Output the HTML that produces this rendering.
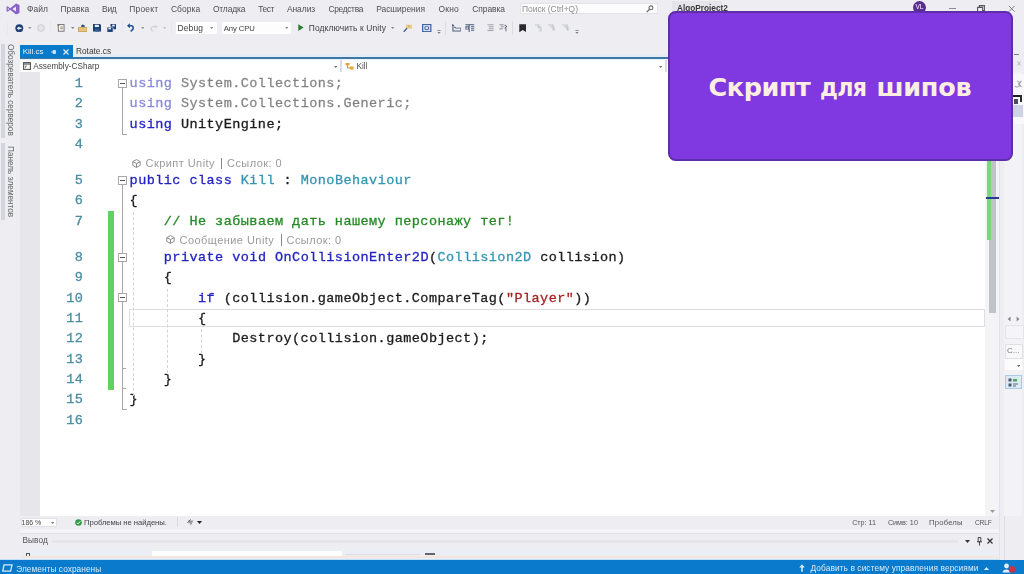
<!DOCTYPE html>
<html lang="ru">
<head>
<meta charset="utf-8">
<title>Скрипт для шипов</title>
<style>
html,body{margin:0;padding:0;}
body{width:1024px;height:574px;overflow:hidden;position:relative;background:#eeeef2;font-family:"Liberation Sans",sans-serif;}
.abs{position:absolute;}
#vs{position:absolute;left:0;top:0;width:1024px;height:574px;filter:blur(0.55px);will-change:transform;}
.t{position:absolute;white-space:pre;line-height:1;}
/* menu */
.menu{font-size:8.45px;color:#505054;top:5.1px;}
.tb{font-size:8.45px;color:#404044;top:23.9px;}
.sm{font-size:8.3px;letter-spacing:0.1px;}
/* code */
.ln{position:absolute;left:40px;width:43.3px;text-align:right;font-family:"Liberation Mono",monospace;font-size:13.5px;letter-spacing:0.45px;line-height:20px;color:#4d8da3;height:20px;-webkit-text-stroke:0.3px currentColor;}
.cl{position:absolute;left:129.6px;font-family:"Liberation Mono",monospace;font-size:13.5px;letter-spacing:0.45px;line-height:20px;height:20px;white-space:pre;color:#1c1c1c;-webkit-text-stroke:0.3px currentColor;}
.kw{color:#2424c4;}
.ty{color:#3595b3;}
.cm{color:#258a25;}
.st{color:#a82222;}
.dim{opacity:.55;}
.lens{position:absolute;font-size:11px;letter-spacing:0.45px;color:#9a9a9a;white-space:pre;line-height:12px;}
.ob{position:absolute;width:7px;height:7px;border:1px solid #a8a8a8;background:#fff;}
.ob:after{content:"";position:absolute;left:1px;right:1px;top:3px;height:1px;background:#555;}
</style>
</head>
<body>
<div class="abs" style="left:0;top:560px;width:1024px;height:14px;background:#0a7acc;"></div>
<div id="vs">
<!-- ===== title / menu bar ===== -->
<div class="abs" id="menubar" style="left:0;top:0;width:1024px;height:18px;background:#eeeef2;"></div>
<svg class="abs" style="left:6px;top:3px" width="14" height="12" viewBox="0 0 14 12"><path d="M10 0.5 L13.5 2 V10 L10 11.5 L4.2 6.8 L1.6 8.8 L0.5 8.2 V3.8 L1.6 3.2 L4.2 5.2 Z M10 3.6 L6.4 6 L10 8.4 Z M1.8 4.8 V7.2 L3.2 6 Z" fill="#8862c6"/></svg>
<span class="t menu" style="left:26.9px;letter-spacing:0.083px;">Файл</span>
<span class="t menu" style="left:60.4px;letter-spacing:0.037px;">Правка</span>
<span class="t menu" style="left:102.1px;letter-spacing:-0.333px;">Вид</span>
<span class="t menu" style="left:129.2px;letter-spacing:0.241px;">Проект</span>
<span class="t menu" style="left:170.9px;letter-spacing:0.082px;">Сборка</span>
<span class="t menu" style="left:212.9px;letter-spacing:-0.143px;">Отладка</span>
<span class="t menu" style="left:258.2px;letter-spacing:-0.390px;">Тест</span>
<span class="t menu" style="left:286.9px;letter-spacing:-0.040px;">Анализ</span>
<span class="t menu" style="left:328.4px;letter-spacing:-0.342px;">Средства</span>
<span class="t menu" style="left:376.2px;letter-spacing:-0.031px;">Расширения</span>
<span class="t menu" style="left:438.4px;letter-spacing:0.264px;">Окно</span>
<span class="t menu" style="left:472.2px;letter-spacing:-0.052px;">Справка</span>

<!-- search box -->
<div class="abs" style="left:519.5px;top:2.8px;width:138.5px;height:11.5px;background:#fcfcfd;border:1px solid #e2e2e8;box-sizing:border-box;"></div>
<span class="t" style="left:522px;top:4.8px;font-size:8.45px;color:#8e8e8e;">Поиск (Ctrl+Q)</span>
<svg class="abs" style="left:645.5px;top:4.6px" width="8" height="8" viewBox="0 0 9 9"><circle cx="5.6" cy="3.2" r="2.2" fill="none" stroke="#666" stroke-width="1.2"/><path d="M4 4.8 L0.8 8" stroke="#666" stroke-width="1.4"/></svg>
<div class="abs" style="left:672px;top:1px;width:50px;height:13px;background:#e4e4ea;"></div>
<span class="t" style="left:677px;top:4.6px;font-size:8.25px;color:#3a3a3a;font-weight:bold;">AlgoProject2</span>
<div class="abs" style="left:913px;top:1px;width:13px;height:13px;border-radius:7px;background:#5c2d91;"></div>
<span class="t" style="left:915.5px;top:4px;font-size:6.5px;color:#fff;">VL</span>
<div class="abs" style="left:948.5px;top:8px;width:7px;height:1px;background:#8c8c8c;"></div>
<svg class="abs" style="left:977px;top:4.5px" width="8" height="8" viewBox="0 0 8 8"><path d="M0.6 2.4 H5.6 V7.4 H0.6 Z M2.4 2.4 V0.6 H7.4 V5.6 H5.6" fill="none" stroke="#555" stroke-width="1.1"/></svg>
<svg class="abs" style="left:1007.5px;top:5px" width="7.5" height="7.5" viewBox="0 0 9 9"><path d="M1 1 L8 8 M8 1 L1 8" stroke="#777" stroke-width="1.1"/></svg>

<!-- ===== toolbar ===== -->
<div class="abs" id="toolbar" style="left:0;top:18px;width:1024px;height:26px;background:#eeeef2;"></div>
<div class="abs" style="left:6.5px;top:22px;width:1.5px;height:13px;background:#e8e8ee;"></div>
<!-- back -->
<svg class="abs" style="left:15px;top:23.7px" width="8.6" height="8.6" viewBox="0 0 10 10"><circle cx="5" cy="5" r="4.6" fill="#1d3f74"/><path d="M2 5 L5 2.6 V4.2 H7.6 V5.8 H5 V7.4 Z" fill="#eef"/></svg>
<svg class="abs" style="left:28.3px;top:27px" width="3.6" height="2.2" viewBox="0 0 5 3"><path d="M0 0 H5 L2.5 3 Z" fill="#9a9aa4"/></svg>
<svg class="abs" style="left:36.5px;top:24px" width="8" height="8" viewBox="0 0 9 9"><circle cx="4.5" cy="4.5" r="3.6" fill="#e6e6ea" stroke="#cfcfd6" stroke-width="1.2"/></svg>
<div class="abs" style="left:50px;top:21px;width:1px;height:13px;background:#e7e7ed;"></div>
<!-- new item -->
<svg class="abs" style="left:56.5px;top:23.3px" width="8.4" height="9" viewBox="0 0 10 11"><rect x="1.5" y="2" width="7" height="8" fill="#fafafa" stroke="#666" stroke-width="1.1"/><path d="M0.5 1.5 l2 2 M2.5 1.5 l-2 2 M4 5 h3 M4 7 h3" stroke="#7a6a3a" stroke-width="1"/></svg>
<svg class="abs" style="left:70.5px;top:27px" width="3.6" height="2.2" viewBox="0 0 5 3"><path d="M0 0 H5 L2.5 3 Z" fill="#8a8a94"/></svg>
<!-- open -->
<svg class="abs" style="left:78px;top:23.6px" width="9.4" height="8.4" viewBox="0 0 10 11" preserveAspectRatio="none"><path d="M0.5 10 V4.5 H9.5 V10 Z" fill="#e8c37a" stroke="#b98f3c" stroke-width=".8"/><path d="M3.5 4 V1.5 L5.2 0.5 L7 1.5 V4" fill="#2a4f86"/></svg>
<!-- save -->
<svg class="abs" style="left:92.8px;top:24.2px" width="8.2" height="7.6" viewBox="0 0 9 10" preserveAspectRatio="none"><path d="M0 0 H7.5 L9 1.5 V10 H0 Z" fill="#1d3f74"/><rect x="2" y="1" width="4.5" height="3" fill="#e8eefa"/><rect x="2" y="6.5" width="5" height="3.5" fill="#3b5c92"/></svg>
<!-- save all -->
<svg class="abs" style="left:106.6px;top:23.5px" width="9.6" height="8.4" viewBox="0 0 11 11" preserveAspectRatio="none"><path d="M4 0 H10 L11 1 V7 H4 Z" fill="#1d3f74"/><rect x="6" y="0.8" width="3" height="2.4" fill="#e8eefa"/><path d="M0 4 H6 L7 5 V11 H0 Z" fill="#1d3f74" stroke="#eeeef2" stroke-width=".8"/><rect x="1.6" y="4.8" width="3" height="2.2" fill="#e8eefa"/></svg>
<div class="abs" style="left:121.5px;top:21px;width:1px;height:13px;background:#e7e7ed;"></div>
<!-- undo -->
<svg class="abs" style="left:126.5px;top:23.4px" width="8" height="8.8" viewBox="0 0 10 11"><path d="M1.2 3.5 H5.8 A3 3 0 0 1 5.8 9.2 L4.6 10.4" fill="none" stroke="#1f4f94" stroke-width="2"/><path d="M0 3.5 L3.6 0.4 V6.6 Z" fill="#1f4f94"/></svg>
<svg class="abs" style="left:140.5px;top:27px" width="3.6" height="2.2" viewBox="0 0 5 3"><path d="M0 0 H5 L2.5 3 Z" fill="#9a9aa4"/></svg>
<!-- redo (disabled) -->
<svg class="abs" style="left:150px;top:23.6px" width="7.6" height="8.4" viewBox="0 0 9 10"><path d="M8 3.2 H4 A2.6 2.6 0 0 0 4 8.4" fill="none" stroke="#d2d2da" stroke-width="1.6"/><path d="M9 3.2 L6 0.6 V5.8 Z" fill="#d2d2da"/></svg>
<svg class="abs" style="left:162.5px;top:27px" width="3.6" height="2.2" viewBox="0 0 5 3"><path d="M0 0 H5 L2.5 3 Z" fill="#c4c4cc"/></svg>
<div class="abs" style="left:170.5px;top:21px;width:1px;height:13px;background:#e7e7ed;"></div>
<!-- combos -->
<div class="abs" style="left:176px;top:22px;width:41px;height:12px;background:#fdfdfe;"></div>
<span class="t tb" style="left:177.5px;letter-spacing:0.156px;">Debug</span>
<svg class="abs" style="left:210px;top:27px" width="3.4" height="2.1" viewBox="0 0 4 2.5"><path d="M0 0 H4 L2 2.5 Z" fill="#8a8a94"/></svg>
<div class="abs" style="left:221.5px;top:22px;width:69.5px;height:12px;background:#fdfdfe;"></div>
<span class="t tb" style="left:223.7px;top:24.53px;font-size:7.7px;letter-spacing:-0.071px;">Any CPU</span>
<svg class="abs" style="left:284.5px;top:27px" width="3.4" height="2.1" viewBox="0 0 4 2.5"><path d="M0 0 H4 L2 2.5 Z" fill="#8a8a94"/></svg>
<svg class="abs" style="left:298px;top:24px" width="6" height="7.2" viewBox="0 0 7 8"><path d="M0.3 0 L6.6 4 L0.3 8 Z" fill="#2f7d32"/></svg>
<span class="t tb" style="left:308.8px;letter-spacing:0.104px;">Подключить к Unity</span>
<svg class="abs" style="left:390.5px;top:27px" width="3.4" height="2.1" viewBox="0 0 4 2.5"><path d="M0 0 H4 L2 2.5 Z" fill="#8a8a94"/></svg>
<!-- yellow icon -->
<svg class="abs" style="left:403px;top:23.8px" width="9.5" height="8.4" viewBox="0 0 10 10" preserveAspectRatio="none"><path d="M3 0.8 H9.6 V5.6 H3 Z" fill="#e9cf86"/><path d="M0.8 9.4 L4.2 4.8" stroke="#44639a" stroke-width="1.6"/><path d="M5 1.6 l2 2" stroke="#b59a4a" stroke-width="1"/></svg>
<!-- blue square icon -->
<svg class="abs" style="left:422.3px;top:23.8px" width="9.5" height="8.2" viewBox="0 0 10 10" preserveAspectRatio="none"><rect x=".7" y=".7" width="8.6" height="8.6" fill="#dfe7f4" stroke="#3e5f9a" stroke-width="1.3"/><circle cx="5" cy="5" r="2.1" fill="none" stroke="#3e5f9a" stroke-width="1.1"/></svg>
<svg class="abs" style="left:437px;top:29.5px" width="4" height="4" viewBox="0 0 5 5"><path d="M0.5 0.6 H4.5" stroke="#777" stroke-width="1"/><path d="M0.5 2.4 H4.5 L2.5 4.8 Z" fill="#777"/></svg>
<div class="abs" style="left:445px;top:21px;width:1px;height:14px;background:#dcdce3;"></div>
<svg class="abs" style="left:451.5px;top:23.8px" width="9.5" height="8.2" viewBox="0 0 10 10" preserveAspectRatio="none"><path d="M1 0.5 V8.5 H9.5 V5 H4 L2.5 3.5" fill="none" stroke="#4a5a78" stroke-width="1.1"/><path d="M0 0 l2.6 2.4 h-2.6z" fill="#4a5a78"/></svg>
<svg class="abs" style="left:465px;top:23.6px" width="10.2" height="8.6" viewBox="0 0 11 11" preserveAspectRatio="none"><path d="M0.5 1 H10 M4.5 1 V10.5 M1 3.5 H4 V6.5 H1 Z M6.5 3 H10 M6.5 5.5 H10 M6.5 8 H10" fill="none" stroke="#4a5a78" stroke-width="1.1"/></svg>
<svg class="abs" style="left:486.5px;top:24.2px" width="7" height="7.4" viewBox="0 0 8 9" preserveAspectRatio="none"><path d="M0.5 1 H7.5 M2 3.4 H7.5 M2 5.8 H7.5 M0.5 8 H7.5" stroke="#9a9aa6" stroke-width="1.1"/></svg>
<svg class="abs" style="left:498.5px;top:24.2px" width="8.4" height="7.6" viewBox="0 0 9 9" preserveAspectRatio="none"><path d="M0.5 1 H5 M2 3.4 H5 M0.5 5.8 H4 M6 1 L8.3 3 L6 5.2 M7.5 5 V8.5" fill="none" stroke="#6a6a78" stroke-width="1.1"/></svg>
<div class="abs" style="left:511.5px;top:21px;width:1px;height:14px;background:#dcdce3;"></div>
<!-- bookmark -->
<svg class="abs" style="left:518.5px;top:23.6px" width="7.6" height="8.4" viewBox="0 0 8 9" preserveAspectRatio="none"><path d="M0.3 0.3 H7.7 V8.8 L4 6.4 L0.3 8.8 Z" fill="#2a2a2e"/></svg>
<svg class="abs" style="left:533.5px;top:23.5px" width="8" height="8" viewBox="0 0 8 8"><path d="M1 1 H5 V5 M3 3 H7 V7 H5" fill="none" stroke="#c6c6cf" stroke-width="1.1"/></svg>
<svg class="abs" style="left:547px;top:23.5px" width="8" height="8" viewBox="0 0 8 8"><path d="M1 1 H6 V6 M3 3 H7 V7" fill="none" stroke="#c6c6cf" stroke-width="1.1"/></svg>
<svg class="abs" style="left:561px;top:23.5px" width="8" height="8" viewBox="0 0 8 8"><path d="M1 1 H6 V6 M3 3 H7 V7" fill="none" stroke="#c6c6cf" stroke-width="1.1"/></svg>
<svg class="abs" style="left:575px;top:29.5px" width="4" height="4" viewBox="0 0 5 5"><path d="M0.5 0.6 H4.5" stroke="#777" stroke-width="1"/><path d="M0.5 2.4 H4.5 L2.5 4.8 Z" fill="#777"/></svg>


<!-- ===== left strip ===== -->
<div class="abs" id="leftstrip" style="left:0;top:44px;width:20px;height:516px;background:#eeeef2;"></div>
<div class="abs" style="left:1px;top:44px;width:4px;height:94px;background:#d4d5dd;"></div>
<div class="abs" style="left:1px;top:143px;width:4px;height:77px;background:#d4d5dd;"></div>
<span class="t" style="left:14.4px;top:44px;font-size:8.2px;color:#686868;transform-origin:0 0;transform:rotate(90deg);">Обозреватель серверов</span>
<span class="t" style="left:14.4px;top:146.3px;font-size:8.2px;color:#686868;transform-origin:0 0;transform:rotate(90deg);">Панель элементов</span>


<!-- ===== tabs ===== -->
<div class="abs" style="left:20px;top:53.5px;width:980px;height:4px;background:linear-gradient(to bottom,rgba(222,238,252,0),#d9ebfa);"></div>
<div class="abs" id="tabs" style="left:20px;top:57.4px;width:980px;height:1.6px;background:#3f76a2;"></div>
<div class="abs" style="left:20px;top:44.5px;width:53px;height:13.5px;background:#0a7acb;"></div>
<span class="t" style="left:22.7px;top:47.7px;font-size:8px;color:#e8f2fb;">Kill.cs</span>
<svg class="abs" style="left:51px;top:50px" width="6" height="4" viewBox="0 0 6 4"><path d="M0 2 H2 M2 0.5 V3.5 H4.5 V0.5 Z" fill="#cfe4f6" stroke="#cfe4f6" stroke-width=".8"/></svg>
<svg class="abs" style="left:62.5px;top:49px" width="6" height="6" viewBox="0 0 6 6"><path d="M0.5 0.5 L5.5 5.5 M5.5 0.5 L0.5 5.5" stroke="#e6f1fb" stroke-width="1.1"/></svg>
<span class="t" style="left:76px;top:47.1px;font-size:8.3px;color:#3a3a3a;">Rotate.cs</span>
<!-- nav bar -->
<div class="abs" style="left:20px;top:59px;width:980px;height:13.5px;background:#fff;border-bottom:1px solid #dcdce0;box-sizing:border-box;"></div>
<div class="abs" style="left:20px;top:59px;width:980px;height:2px;background:linear-gradient(to bottom,#e4f1fb,#fff);"></div>
<svg class="abs" style="left:22.5px;top:61.5px" width="8" height="8" viewBox="0 0 8 8"><rect x=".6" y=".6" width="6.8" height="6.8" fill="#fff" stroke="#555" stroke-width="1.1"/><path d="M0.6 2 H7.4" stroke="#555" stroke-width="1.2"/><path d="M2.4 4 V6.2 M2.4 4 H4" stroke="#777" stroke-width=".9"/></svg>
<span class="t" style="left:33.3px;top:63px;font-size:8.2px;color:#444;">Assembly-CSharp</span>
<svg class="abs" style="left:334px;top:65.5px" width="3.4" height="2.1" viewBox="0 0 4 2.5"><path d="M0 0 H4 L2 2.5 Z" fill="#777"/></svg>
<div class="abs" style="left:339.5px;top:59.5px;width:2px;height:12px;background:#d9dbe6;"></div>
<svg class="abs" style="left:345px;top:61.5px" width="9" height="8" viewBox="0 0 9 8"><path d="M0.5 1 H4.5 V3.5 H0.5 Z" fill="#e2a33a"/><path d="M5 4.5 H8.5 V7.5 H5 Z" fill="#e2a33a"/><path d="M2.5 3.5 V6 H5" fill="none" stroke="#b5823a" stroke-width=".9"/></svg>
<span class="t" style="left:356.5px;top:63px;font-size:8.2px;color:#555;">Kill</span>
<svg class="abs" style="left:658.5px;top:65.5px" width="3.4" height="2.1" viewBox="0 0 4 2.5"><path d="M0 0 H4 L2 2.5 Z" fill="#777"/></svg>
<div class="abs" style="left:664.5px;top:59.5px;width:2px;height:12px;background:#d9dbe6;"></div>


<!-- ===== editor ===== -->
<div class="abs" id="editor" style="left:20px;top:72px;width:965px;height:443.5px;background:#fff;"></div>
<div class="abs" style="left:20px;top:72px;width:19.5px;height:443.5px;background:#e6e6eb;"></div>
<div class="abs" style="left:128.5px;top:308.5px;width:856.5px;height:18.5px;border:1px solid #dedede;box-sizing:border-box;background:#fff;"></div>
<div class="abs" style="left:108px;top:211px;width:6px;height:178.5px;background:#62d162;"></div>
<div class="ln" style="top:73.90px">1</div>
<div class="cl" style="top:73.90px"><span class="dim"><span class="kw">using</span> System.Collections;</span></div>
<div class="ln" style="top:94.20px">2</div>
<div class="cl" style="top:94.20px"><span class="dim"><span class="kw">using</span> System.Collections.Generic;</span></div>
<div class="ln" style="top:114.50px">3</div>
<div class="cl" style="top:114.50px"><span class="kw">using</span> UnityEngine;</div>
<div class="ln" style="top:134.70px">4</div>
<div class="ln" style="top:171.00px">5</div>
<div class="cl" style="top:171.00px"><span class="kw">public</span> <span class="kw">class</span> <span class="ty">Kill</span> : <span class="ty">MonoBehaviour</span></div>
<div class="ln" style="top:191.35px">6</div>
<div class="cl" style="top:191.35px">{</div>
<div class="ln" style="top:211.70px">7</div>
<div class="cl" style="top:211.70px">    <span class="cm">// Не забываем дать нашему персонажу тег!</span></div>
<div class="ln" style="top:247.90px">8</div>
<div class="cl" style="top:247.90px">    <span class="kw">private</span> <span class="kw">void</span> <span class="kw">OnCollisionEnter2D</span>(<span class="ty">Collision2D</span> collision)</div>
<div class="ln" style="top:268.27px">9</div>
<div class="cl" style="top:268.27px">    {</div>
<div class="ln" style="top:288.64px">10</div>
<div class="cl" style="top:288.64px">        <span class="kw">if</span> (collision.gameObject.CompareTag(<span class="st">"Player"</span>))</div>
<div class="ln" style="top:309.01px">11</div>
<div class="cl" style="top:309.01px">        {</div>
<div class="ln" style="top:329.38px">12</div>
<div class="cl" style="top:329.38px">            Destroy(collision.gameObject);</div>
<div class="ln" style="top:349.75px">13</div>
<div class="cl" style="top:349.75px">        }</div>
<div class="ln" style="top:370.12px">14</div>
<div class="cl" style="top:370.12px">    }</div>
<div class="ln" style="top:390.49px">15</div>
<div class="cl" style="top:390.49px">}</div>
<div class="ln" style="top:410.86px">16</div>
<!-- outlining -->
<div class="abs" style="left:122px;top:88px;width:1px;height:46px;background:#a8a8a8;"></div>
<div class="abs" style="left:122px;top:133.5px;width:5px;height:1px;background:#a8a8a8;"></div>
<div class="abs" style="left:122px;top:185px;width:1px;height:224px;background:#a8a8a8;"></div>
<div class="abs" style="left:122px;top:408.5px;width:5px;height:1px;background:#a8a8a8;"></div>
<div class="abs" style="left:122px;top:367.5px;width:4px;height:1px;background:#a8a8a8;"></div>
<div class="abs" style="left:122px;top:387.5px;width:4px;height:1px;background:#a8a8a8;"></div>
<div class="ob" style="left:118px;top:78.5px"></div>
<div class="ob" style="left:118px;top:175.5px"></div>
<div class="ob" style="left:118px;top:252.5px"></div>
<div class="ob" style="left:118px;top:293px"></div>
<!-- indent guides -->
<div class="abs" style="left:132.5px;top:212px;width:0;height:184px;border-left:1px dashed #d4d4d4;"></div>
<div class="abs" style="left:167px;top:289px;width:0;height:84px;border-left:1px dashed #d4d4d4;"></div>
<div class="abs" style="left:201px;top:329px;width:0;height:24px;border-left:1px dashed #d4d4d4;"></div>
<!-- code lens -->
<svg class="abs" style="left:131.5px;top:158.6px" width="9" height="9" viewBox="0 0 9 9"><path d="M4.5 0.6 L8.2 2.6 V6.4 L4.5 8.4 L0.8 6.4 V2.6 Z M0.8 2.6 L4.5 4.6 L8.2 2.6 M4.5 4.6 V8.4" fill="none" stroke="#8c8c8c" stroke-width="1"/></svg>
<span class="lens" style="left:145.5px;top:157.1px">Скрипт Unity</span>
<div class="abs" style="left:221px;top:157.6px;width:1px;height:11.5px;background:#8a8a8a;"></div>
<span class="lens" style="left:227px;top:157.1px">Ссылок: 0</span>
<svg class="abs" style="left:165.5px;top:235.1px" width="9" height="9" viewBox="0 0 9 9"><path d="M4.5 0.6 L8.2 2.6 V6.4 L4.5 8.4 L0.8 6.4 V2.6 Z M0.8 2.6 L4.5 4.6 L8.2 2.6 M4.5 4.6 V8.4" fill="none" stroke="#8c8c8c" stroke-width="1"/></svg>
<span class="lens" style="left:179.5px;top:233.6px">Сообщение Unity</span>
<div class="abs" style="left:281px;top:234.1px;width:1px;height:11.5px;background:#8a8a8a;"></div>
<span class="lens" style="left:286.5px;top:233.6px">Ссылок: 0</span>


<!-- ===== bottom ===== -->
<div class="abs" id="bottom" style="left:20px;top:515.5px;width:980px;height:13px;background:#eeeef2;"></div>
<div class="abs" style="left:20px;top:528.5px;width:980px;height:4px;background:#f4f4f7;"></div>
<div class="abs" style="left:20.5px;top:518px;width:36.5px;height:9px;background:#fdfdfe;border:1px solid #e0e0e6;box-sizing:border-box;"></div>
<span class="t sm" style="left:21.6px;top:519.39px;font-size:7.0px;color:#444;letter-spacing:-0.040px;">186 %</span>
<svg class="abs" style="left:51px;top:521.5px" width="3.4" height="2.1" viewBox="0 0 4 2.5"><path d="M0 0 H4 L2 2.5 Z" fill="#888"/></svg>
<svg class="abs" style="left:74.5px;top:519px" width="7" height="7" viewBox="0 0 7 7"><circle cx="3.5" cy="3.5" r="3.3" fill="#2f9a45"/><path d="M1.8 3.6 L3.1 4.8 L5.3 2.3" fill="none" stroke="#fff" stroke-width="1"/></svg>
<span class="t sm" style="left:84.0px;top:518.80px;font-size:7.7px;color:#444;letter-spacing:-0.057px;">Проблемы не найдены.</span>
<div class="abs" style="left:176.5px;top:517px;width:1px;height:10px;background:#dadae0;"></div>
<svg class="abs" style="left:187px;top:519px" width="7" height="7" viewBox="0 0 7 7"><path d="M1 1.5 H6.5 L3.8 6.5 Z" fill="#9a9aa2"/><path d="M0.5 4 L3.5 0.5" stroke="#555" stroke-width="1"/></svg>
<svg class="abs" style="left:197px;top:521px" width="5" height="3" viewBox="0 0 5 3"><path d="M0 0 H5 L2.5 3 Z" fill="#222"/></svg>
<span class="t sm" style="left:852.2px;top:519.22px;font-size:7.2px;color:#555;letter-spacing:-0.023px;">Стр: 11</span>
<span class="t sm" style="left:887.9px;top:519.22px;font-size:7.2px;color:#555;letter-spacing:0.004px;">Симв: 10</span>
<span class="t sm" style="left:929.1px;top:518.80px;font-size:7.7px;color:#555;letter-spacing:0.160px;">Пробелы</span>
<span class="t sm" style="left:974.9px;top:519.73px;font-size:6.6px;color:#555;letter-spacing:-0.106px;">CRLF</span>
<!-- output panel -->
<div class="abs" style="left:20px;top:532.5px;width:980px;height:27.5px;background:#eeeef2;border-top:1px solid #e0e0e6;box-sizing:border-box;"></div>
<span class="t sm" style="left:22.4px;top:536.30px;color:#555;letter-spacing:0.077px;">Вывод</span>
<div class="abs" style="left:52px;top:540px;width:906px;height:3px;background:#e6e6ea;"></div>
<svg class="abs" style="left:965px;top:540px" width="5" height="3" viewBox="0 0 5 3"><path d="M0 0 H5 L2.5 3 Z" fill="#333"/></svg>
<svg class="abs" style="left:976.5px;top:536.5px" width="5" height="9" viewBox="0 0 5 9"><path d="M1.2 0.5 H3.8 V4.5 H1.2 Z M0 4.8 H5 M2.5 5 V8.5" fill="none" stroke="#444" stroke-width="1"/></svg>
<svg class="abs" style="left:987px;top:538px" width="6" height="6" viewBox="0 0 6 6"><path d="M0.5 0.5 L5.5 5.5 M5.5 0.5 L0.5 5.5" stroke="#333" stroke-width="1.2"/></svg>
<div class="abs" style="left:22px;top:549px;width:976px;height:11px;background:#eceef6;"></div>
<div class="abs" style="left:25.5px;top:552.5px;width:4px;height:3px;border:1px solid #555;border-bottom:none;box-sizing:border-box;"></div>
<div class="abs" style="left:151.5px;top:551px;width:190.5px;height:6px;background:#fff;"></div>
<div class="abs" style="left:22px;top:556px;width:976px;height:1.5px;background:#f3e6dc;"></div>
<div class="abs" style="left:345px;top:553.5px;width:75px;height:1.5px;background:#dcdce2;"></div>
<div class="abs" style="left:425px;top:553px;width:10px;height:2px;background:#666;"></div>
<!-- status bar -->
<div class="abs" style="left:0;top:558.5px;width:1024px;height:1.5px;background:#bfe0f5;"></div>
<div class="abs" style="left:0;top:560px;width:1024px;height:14px;background:#0a7acc;"></div>
<svg class="abs" style="left:1.5px;top:564px" width="11" height="8" viewBox="0 0 11 8"><path d="M2 0.8 H10 L8.6 7.2 H0.8 Z" fill="none" stroke="#d6ebfa" stroke-width="1.3"/></svg>
<span class="t sm" style="left:16.2px;top:564.50px;color:#d8ebf9;letter-spacing:0.059px;">Элементы сохранены</span>
<svg class="abs" style="left:798.5px;top:564px" width="6" height="8" viewBox="0 0 6 8"><path d="M3 0.3 L5.8 3.6 H3.8 V7.8 H2.2 V3.6 H0.2 Z" fill="#d8ebf9"/></svg>
<span class="t sm" style="left:810.5px;top:564.2px;color:#d8ebf9;letter-spacing:0.108px;">Добавить в систему управления версиями</span>
<svg class="abs" style="left:984px;top:566.5px" width="5" height="3" viewBox="0 0 5 3"><path d="M0 3 H5 L2.5 0 Z" fill="#d8ebf9"/></svg>
<svg class="abs" style="left:1001.5px;top:562.5px" width="14" height="10" viewBox="0 0 14 10"><circle cx="4.5" cy="3" r="2.4" fill="#e4eef8"/><path d="M0.5 9.5 C0.5 5.5 8.5 5.5 8.5 9.5 Z" fill="#e4eef8"/><circle cx="10" cy="6.4" r="3.3" fill="#c8324a"/></svg>


<!-- ===== right ===== -->
<div class="abs" id="right" style="left:985px;top:71.5px;width:14px;height:444px;background:#f4f4f7;"></div>
<div class="abs" style="left:988.5px;top:71.5px;width:7px;height:241.5px;background:#c2c3c9;"></div>
<div class="abs" style="left:986.5px;top:71.5px;width:4.5px;height:168px;background:#7bd77b;"></div>
<div class="abs" style="left:986px;top:197.2px;width:13px;height:2px;background:#2a3a9c;"></div>
<svg class="abs" style="left:989.5px;top:509.5px" width="5" height="3" viewBox="0 0 5 3"><path d="M0 0 H5 L2.5 3 Z" fill="#999"/></svg>
<div class="abs" style="left:999px;top:44px;width:25px;height:516px;background:#eeeef2;"></div>
<div class="abs" style="left:999px;top:44px;width:1px;height:516px;background:#e2e2e8;"></div>
<div class="abs" style="left:1003.5px;top:44px;width:1px;height:516px;background:#dcdce3;"></div>


<div class="abs" style="left:1004px;top:72px;width:18px;height:444px;background:#f3f3f6;"></div>
<svg class="abs" style="left:1006.5px;top:316px" width="13" height="6" viewBox="0 0 13 6"><path d="M3.6 0.6 V5.4 L0.6 3 Z M9.6 0.6 V5.4 L12.6 3 Z" fill="#8a8a92"/></svg>
<div class="abs" style="left:1004.5px;top:324.5px;width:19.5px;height:14.5px;background:#f5f5f8;border:1px solid #e4e4ea;box-sizing:border-box;"></div>
<div class="abs" style="left:1004.5px;top:343.5px;width:18px;height:15px;background:#f8f8fa;border:1px solid #dfdfe5;box-sizing:border-box;"></div>
<span class="t" style="left:1007px;top:346.5px;font-size:8px;color:#777;">C...</span>
<div class="abs" style="left:1004.5px;top:358.5px;width:18px;height:11.5px;background:#fcfcfd;"></div>
<svg class="abs" style="left:1016.5px;top:365px" width="3.4" height="2.1" viewBox="0 0 4 2.5"><path d="M0 0 H4 L2 2.5 Z" fill="#666"/></svg>
<div class="abs" style="left:1005px;top:375px;width:16.5px;height:14px;background:#dce9f7;border:1px solid #a9c9ea;box-sizing:border-box;"></div>
<svg class="abs" style="left:1008px;top:377.5px" width="11" height="9" viewBox="0 0 11 9"><path d="M0.5 0.5 h3 v3 h-3z M0.5 5.5 h3 v3 h-3z" fill="#4a5a6a"/><path d="M5 1 h4 v2.5 h-4z" fill="#5aa05a"/><path d="M5 6 h5 M5 8 h3" stroke="#5a6a7a" stroke-width="1"/></svg>
<div class="abs" style="left:1013px;top:73.5px;width:11px;height:50px;background:#f8f8fa;"></div>
<div class="abs" style="left:1014px;top:54px;width:4.5px;height:1px;background:#7a7a86;"></div>
<svg class="abs" style="left:1016.5px;top:61px" width="4" height="5" viewBox="0 0 4 5"><path d="M0.5 0.5 L3.5 4.5 M3.5 0.5 L0.5 4.5" stroke="#b0b0ba" stroke-width=".9"/></svg>
<svg class="abs" style="left:1014px;top:79.5px" width="8" height="8" viewBox="0 0 8 8"><path d="M3 1 A3 3 0 1 1 0.8 6.2 M7.5 1 L4.5 4 L7.5 7" fill="none" stroke="#a2a2aa" stroke-width="1.1"/></svg>
<div class="abs" style="left:1013px;top:95.3px;width:8.5px;height:2.2px;background:#1e1e22;"></div>
<div class="abs" style="left:1019.5px;top:95.3px;width:2px;height:7px;background:#2a2a30;"></div>
<div class="abs" style="left:1014px;top:99px;width:3.5px;height:5px;background:#4a4a5a;"></div>
<div class="abs" style="left:1013px;top:104.7px;width:9.5px;height:12.5px;background:#cdd3e4;"></div>
</div>
<!-- ===== purple box ===== -->
<div class="abs" style="left:668px;top:11px;width:345px;height:150px;box-sizing:border-box;background:#8038e0;border:2.4px solid #5e2dab;border-radius:7.5px;"></div>
<span class="t" id="title" style="left:708.6px;top:74.7px;font-family:'DejaVu Sans','Liberation Sans',sans-serif;font-weight:bold;font-size:25.5px;letter-spacing:-0.45px;color:#fdeee2;">Скрипт</span>
<span class="t" id="title2" style="left:819.6px;top:74.7px;font-family:'DejaVu Sans','Liberation Sans',sans-serif;font-weight:bold;font-size:25.5px;letter-spacing:-0.75px;color:#fdeee2;transform-origin:0 50%;transform:scaleX(0.87);">для</span>
<span class="t" id="title3" style="left:876.5px;top:74.7px;font-family:'DejaVu Sans','Liberation Sans',sans-serif;font-weight:bold;font-size:25.5px;letter-spacing:-0.3px;color:#fdeee2;">шипов</span>
</body>
</html>
